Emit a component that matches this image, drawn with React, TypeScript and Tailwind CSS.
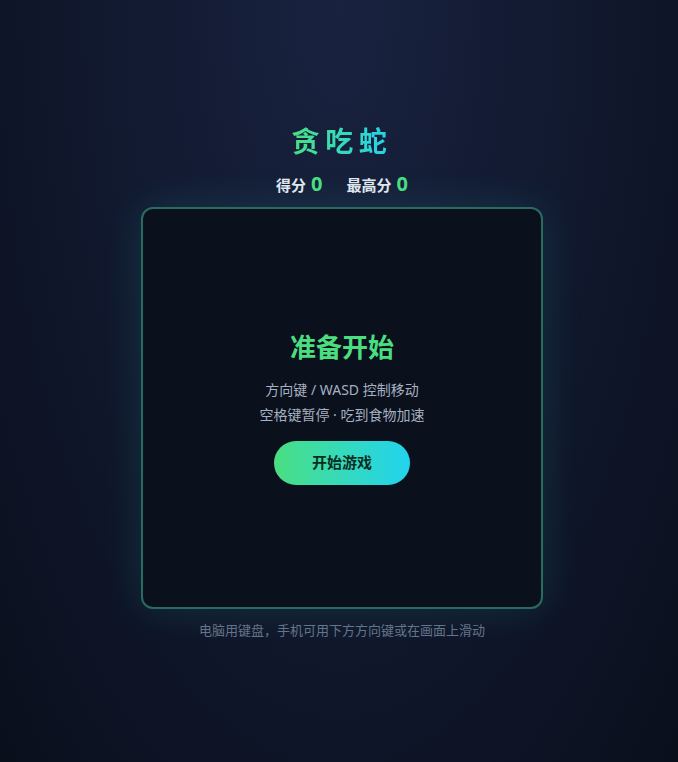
import React from "react";

const font = { fontFamily: '"Noto Sans", "Noto Sans CJK SC", sans-serif' };

export default function App() {
  return (
    <div
      className="min-h-screen w-full pl-[6px] flex flex-col items-center justify-center bg-[radial-gradient(ellipse_at_top,#19223f_0%,#121a31_45%,#0a0f1c_100%)]"
      style={font}
    >
      {/* Title */}
      <h1 className="text-[28px] leading-[34px] font-bold tracking-[0.2em] bg-gradient-to-r from-[#4ade80] to-[#22d3ee] bg-clip-text text-transparent">
        贪吃蛇
      </h1>

      {/* Scores */}
      <div className="mt-3 flex items-center gap-6 h-7">
        <ScoreItem label="得分" value={0} />
        <ScoreItem label="最高分" value={0} />
      </div>

      {/* Board */}
      <div className="mt-[9px] w-[402px] h-[402px] rounded-xl border-2 border-[#2a6b61] bg-[#0a101c] shadow-[0_0_40px_rgba(45,212,191,0.14)] flex flex-col items-center justify-center">
        <h2 className="text-[26px] leading-[32px] font-bold text-[#4ade80]">准备开始</h2>
        <div className="mt-[14px] text-sm leading-[25px] text-[#a7b1c2] text-center">
          <p>方向键 / WASD 控制移动</p>
          <p>空格键暂停 · 吃到食物加速</p>
        </div>
        <button className="mt-[14px] w-[136px] h-[44px] rounded-full bg-gradient-to-r from-[#4ade80] to-[#22d3ee] text-[15px] font-bold text-[#0a2e1d]">
          开始游戏
        </button>
      </div>

      {/* Hint */}
      <p className="mt-3 text-[13px] leading-[18px] text-[#667489]">
        电脑用键盘，手机可用下方方向键或在画面上滑动
      </p>
    </div>
  );
}

function ScoreItem({ label, value }: { label: string; value: number }) {
  return (
    <div className="flex items-baseline gap-[5px]">
      <span className="text-[15px] font-semibold text-[#e2e8f0]">{label}</span>
      <span className="text-xl font-bold text-[#4ade80]">{value}</span>
    </div>
  );
}
